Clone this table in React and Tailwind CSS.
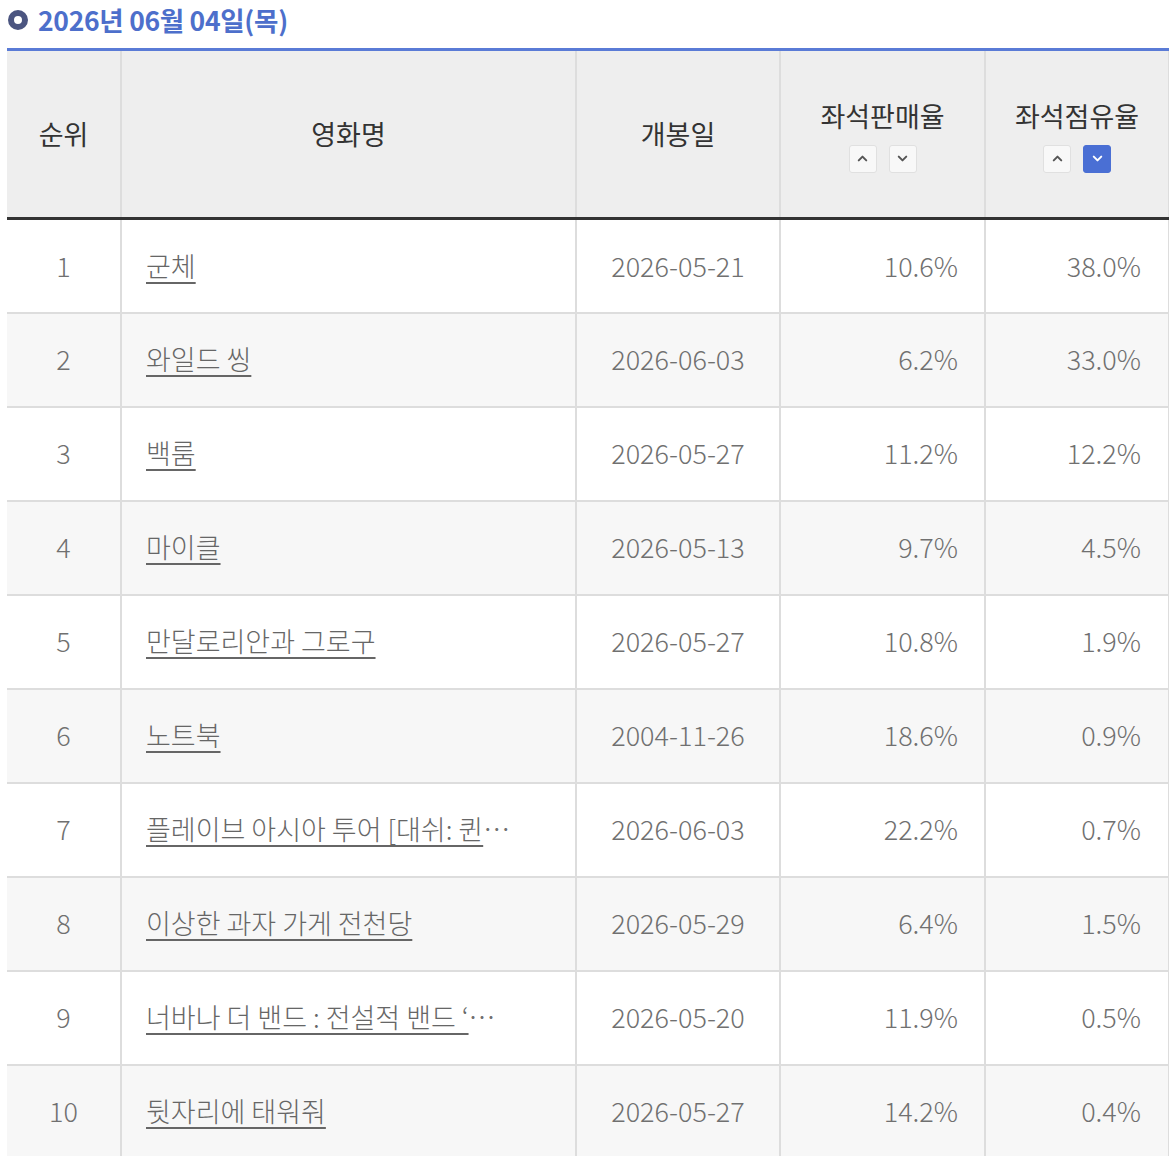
import React from "react"
import { ChevronUp, ChevronDown } from "lucide-react"

const rows = [
    { rank: 1, title: "군체", open: "2026-05-21", sales: "10.6%", share: "38.0%" },
    { rank: 2, title: "와일드 씽", open: "2026-06-03", sales: "6.2%", share: "33.0%" },
    { rank: 3, title: "백룸", open: "2026-05-27", sales: "11.2%", share: "12.2%" },
    { rank: 4, title: "마이클", open: "2026-05-13", sales: "9.7%", share: "4.5%" },
    { rank: 5, title: "만달로리안과 그로구", open: "2026-05-27", sales: "10.8%", share: "1.9%" },
    { rank: 6, title: "노트북", open: "2004-11-26", sales: "18.6%", share: "0.9%" },
    { rank: 7, title: "플레이브 아시아 투어 [대쉬: 퀸즈 갬빗] 인 시네마", open: "2026-06-03", sales: "22.2%", share: "0.7%" },
    { rank: 8, title: "이상한 과자 가게 전천당", open: "2026-05-29", sales: "6.4%", share: "1.5%" },
    { rank: 9, title: "너바나 더 밴드 : 전설적 밴드 ‘너바나’의 이야기", open: "2026-05-20", sales: "11.9%", share: "0.5%" },
    { rank: 10, title: "뒷자리에 태워줘", open: "2026-05-27", sales: "14.2%", share: "0.4%" },
]

function SortButton({ dir, active }) {
    const Icon = dir === "up" ? ChevronUp : ChevronDown
    return (
        <button
            type="button"
            className={
                active
                    ? "w-[28px] h-[28px] flex items-center justify-center rounded-[3px] border border-[#4a6fd4] bg-[#4a6fd4] text-white"
                    : "w-[28px] h-[28px] flex items-center justify-center rounded-[3px] border border-[#e0e0e0] bg-[#f8f8f8] text-[#555]"
            }
        >
            <Icon size={15} strokeWidth={3.2} />
        </button>
    )
}

function SortHeader({ label, active }) {
    return (
        <div className="flex flex-col items-center">
            <span className="leading-[39px]">{label}</span>
            <div className="flex gap-[12px] mt-[10px]">
                <SortButton dir="up" active={active === "up"} />
                <SortButton dir="down" active={active === "down"} />
            </div>
        </div>
    )
}

export default function App() {
    return (
        <div
            className="bg-white w-[1169px] h-[1156px] overflow-hidden pl-[7px]"
            style={{ fontFamily: '"Noto Sans CJK KR", "Noto Sans", sans-serif' }}
        >
            {/* Date heading */}
            <div className="flex items-center h-[40px] mb-[8px]">
                <span className="w-[20px] h-[20px] rounded-full border-[6px] border-[#4b5580] ml-[1px] mr-[10px] blur-[0.6px]" />
                <h2 className="text-[26.5px] font-bold text-[#4d6fcb] tracking-[-0.3px]">
                    2026년 06월 04일(목)
                </h2>
            </div>

            <table className="w-[1162px] border-collapse table-fixed border-t-[3px] border-[#5a7bd6]">
                <colgroup>
                    <col className="w-[114px]" />
                    <col className="w-[455px]" />
                    <col className="w-[204px]" />
                    <col className="w-[205px]" />
                    <col className="w-[184px]" />
                </colgroup>
                <thead>
                    <tr className="bg-[#eeeeee] text-[27px] text-[#333] h-[169px] border-b-[3px] border-b-[#333]">
                        <th className="font-normal border-r-2 border-[#dddddd]">순위</th>
                        <th className="font-normal border-r-2 border-[#dddddd]">영화명</th>
                        <th className="font-normal border-r-2 border-[#dddddd]">개봉일</th>
                        <th className="font-normal border-r-2 border-[#dddddd]">
                            <SortHeader label="좌석판매율" />
                        </th>
                        <th className="font-normal border-r-2 border-[#dddddd]">
                            <SortHeader label="좌석점유율" active="down" />
                        </th>
                    </tr>
                </thead>
                <tbody className="text-[27px] font-light text-[#707070]">
                    {rows.map((r, i) => (
                        <tr
                            key={r.rank}
                            className={(i % 2 === 1 ? "bg-[#f7f7f7]" : "bg-white") + " h-[94px] border-b-2 border-[#dddddd]"}
                        >
                            <td className="text-center border-r-2 border-[#dddddd]">{r.rank}</td>
                            <td className="pl-[24px] border-r-2 border-[#dddddd]">
                                <div className="max-w-[365px] truncate">
                                    <a href="#" className="underline underline-offset-[5px] decoration-[1.5px] text-[#666]">
                                        {r.title}
                                    </a>
                                </div>
                            </td>
                            <td className="text-center border-r-2 border-[#dddddd]">{r.open}</td>
                            <td className="text-right pr-[26px] border-r-2 border-[#dddddd]">{r.sales}</td>
                            <td className="text-right pr-[27px] border-r-2 border-[#dddddd]">{r.share}</td>
                        </tr>
                    ))}
                </tbody>
            </table>
        </div>
    )
}
